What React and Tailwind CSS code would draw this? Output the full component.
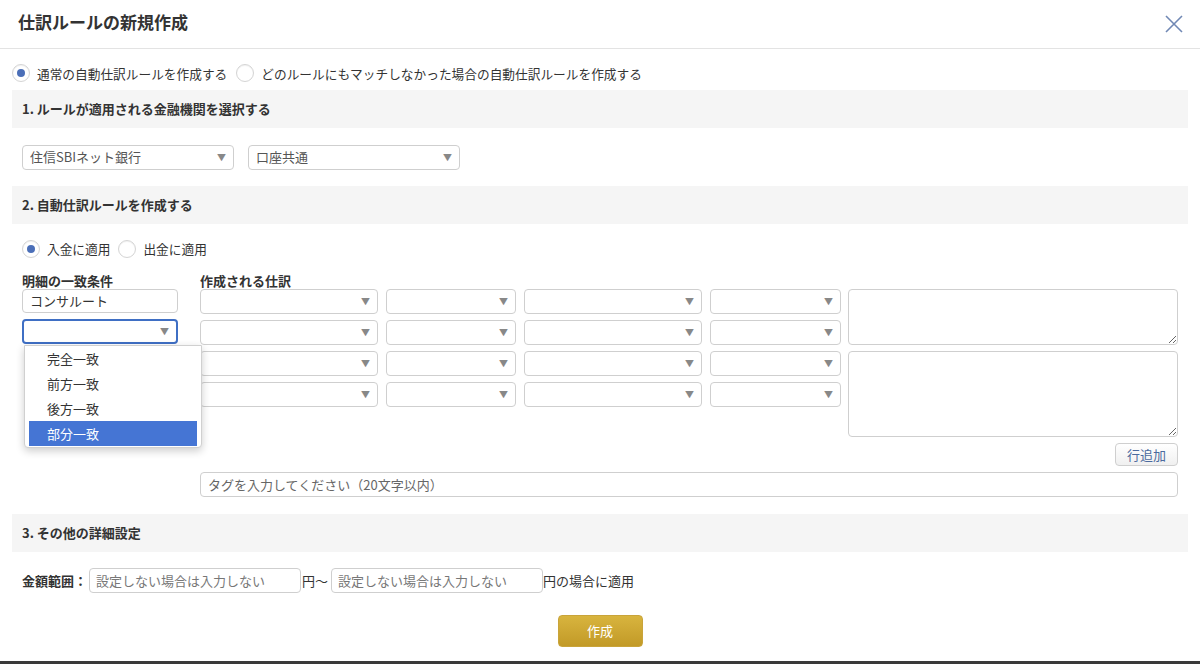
import { useState } from 'react'

// 仕訳ルールの新規作成 modal

const font = { fontFamily: '"Noto Sans CJK JP", "Noto Sans", sans-serif' }

function Radio({ checked, label }) {
  return (
    <label className="flex items-center gap-[7px] text-[12.7px] text-[#333]">
      <span className="w-[18px] h-[18px] rounded-full border border-[#d4d4d4] bg-white flex items-center justify-center shadow-[inset_0_1px_1px_rgba(0,0,0,0.06)]">
        {checked && <span className="w-[8px] h-[8px] rounded-full bg-[#4b6fb8]" />}
      </span>
      {label}
    </label>
  )
}

function Select({ value = '', className = '', focused = false }) {
  return (
    <div
      className={`h-[25px] flex items-center justify-between rounded-[4px] bg-white pl-[7px] pr-[7px] text-[13px] text-[#555] ${
        focused ? 'border-2 border-[#3f6fc4]' : 'border border-[#cfcfcf]'
      } ${className}`}
    >
      <span className="truncate">{value}</span>
      <span className="text-[9px] text-[#888] leading-none">▼</span>
    </div>
  )
}

function SectionHead({ children }) {
  return (
    <div className="h-[38px] bg-[#f5f5f5] flex items-center px-[10px] text-[13px] font-bold text-[#333]">
      {children}
    </div>
  )
}

export default function App() {
  const [hover] = useState(3)
  const options = ['完全一致', '前方一致', '後方一致', '部分一致']

  return (
    <div style={font} className="w-[1200px] h-[664px] bg-white text-[#333] overflow-hidden flex flex-col">
      {/* header */}
      <div className="h-[49px] border-b border-[#e3e3e3] flex items-center justify-between pl-[18px] pr-[16px] shrink-0">
        <h1 className="text-[17px] font-bold text-[#333] -mt-[5px]">仕訳ルールの新規作成</h1>
        <svg width="20" height="20" viewBox="0 0 20 20" className="-mt-[1px]">
          <path d="M2 2 L18 18 M18 2 L2 18" stroke="#7088b4" strokeWidth="1.6" />
        </svg>
      </div>

      <div className="px-[12px] flex flex-col flex-1">
        {/* rule type */}
        <div className="h-[41px] pt-[8px] flex items-center gap-[9px]">
          <Radio checked label="通常の自動仕訳ルールを作成する" />
          <Radio label="どのルールにもマッチしなかった場合の自動仕訳ルールを作成する" />
        </div>

        <SectionHead>1. ルールが適用される金融機関を選択する</SectionHead>
        <div className="h-[58px] flex items-center gap-[14px] px-[10px]">
          <Select value="住信SBIネット銀行" className="w-[212px]" />
          <Select value="口座共通" className="w-[212px]" />
        </div>

        <SectionHead>2. 自動仕訳ルールを作成する</SectionHead>
        <div className="h-[48px] flex items-center gap-[8px] px-[10px] pt-[2px]">
          <Radio checked label="入金に適用" />
          <Radio label="出金に適用" />
        </div>

        <div className="flex px-[10px] gap-[22px]">
          {/* match condition */}
          <div className="w-[156px] shrink-0 relative">
            <div className="text-[13px] font-bold h-[17px] leading-[17px]">明細の一致条件</div>
            <div className="h-[24px] rounded-[4px] border border-[#cfcfcf] flex items-center px-[7px] text-[13px] text-[#333]">
              コンサルート
            </div>
            <Select focused className="mt-[6px]" />
            <div className="absolute left-[2px] top-[73px] w-[178px] bg-white border border-[#d0d0d0] rounded-b-[4px] shadow-[0_3px_8px_rgba(0,0,0,0.2)] px-[4px] pb-[1px] z-10">
              {options.map((o, i) => (
                <div
                  key={o}
                  className={`h-[25px] flex items-center pl-[18px] text-[13px] ${
                    i === hover ? 'bg-[#4575d4] text-white' : 'text-[#333]'
                  }`}
                >
                  {o}
                </div>
              ))}
            </div>
          </div>

          {/* journal entries */}
          <div className="flex-1 flex flex-col">
            <div className="text-[13px] font-bold h-[17px] leading-[17px]">作成される仕訳</div>
            <div className="flex gap-[7px]">
              <div className="grid grid-cols-[178px_130px_178px_131px] gap-x-[8px] gap-y-[6px] content-start">
                {Array.from({ length: 16 }).map((_, i) => (
                  <Select key={i} />
                ))}
              </div>
              <div className="flex-1 flex flex-col gap-[6px]">
                <textarea className="h-[56px] w-full rounded-[4px] border border-[#cfcfcf] resize-y" />
                <textarea className="h-[86px] w-full rounded-[4px] border border-[#cfcfcf] resize-y" />
              </div>
            </div>
            <div className="flex justify-end mt-[6px]">
              <button className="h-[23px] px-[11px] rounded-[4px] border border-[#cfcfcf] bg-gradient-to-b from-white to-[#f0f0f0] text-[13px] text-[#4b6a9e]">
                行追加
              </button>
            </div>
            <input
              placeholder="タグを入力してください（20文字以内）"
              className="mt-[6px] h-[25px] w-full rounded-[4px] border border-[#cfcfcf] px-[7px] text-[13px] placeholder:text-[#666] outline-none"
            />
          </div>
        </div>

        <div className="h-[17px]" />
        <SectionHead>3. その他の詳細設定</SectionHead>

        <div className="h-[55px] flex items-center px-[10px] text-[13px] pt-[2px]">
          <span className="font-bold mr-[2px]">金額範囲：</span>
          <input
            placeholder="設定しない場合は入力しない"
            className="w-[212px] h-[25px] rounded-[4px] border border-[#cfcfcf] px-[6px] text-[13px] placeholder:text-[#777] outline-none"
          />
          <span className="pl-[1px] pr-[3px]">円〜</span>
          <input
            placeholder="設定しない場合は入力しない"
            className="w-[212px] h-[25px] rounded-[4px] border border-[#cfcfcf] px-[6px] text-[13px] placeholder:text-[#777] outline-none"
          />
          <span>円の場合に適用</span>
        </div>

        <div className="flex justify-center pt-[8px]">
          <button className="w-[85px] h-[32px] rounded-[4px] bg-gradient-to-b from-[#d8b43e] to-[#c29a27] border border-[#c9a43a] text-white text-[13px]">
            作成
          </button>
        </div>
      </div>
      <div className="h-[3px] bg-[#3a3a3a] shrink-0" />
    </div>
  )
}
